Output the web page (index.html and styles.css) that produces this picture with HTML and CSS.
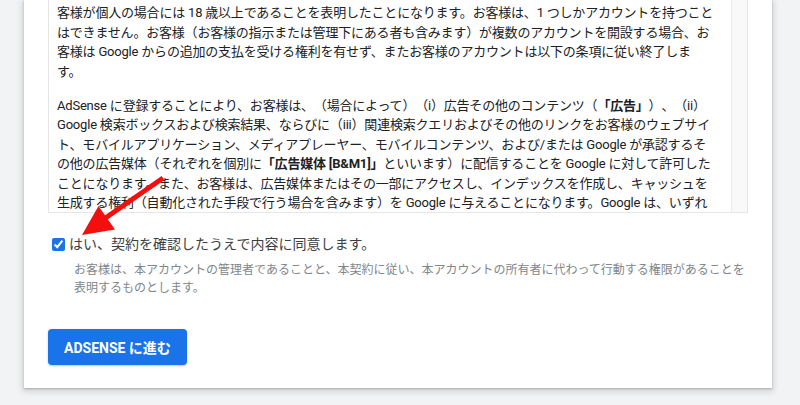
FILE: index.html
```html
<!DOCTYPE html>
<html lang="ja">
<head>
<meta charset="utf-8">
<title>AdSense 利用規約</title>
<link rel="stylesheet" href="styles.css">
</head>
<body>
<div class="page">
  <div class="card">
    <div class="terms">
      <div class="terms-text">
        <p>客様が個人の場合には 18 歳以上であることを表明したことになります。お客様は、1 つしかアカウントを持つこと<br>はできません。お客様（お客様の指示または管理下にある者も含みます）が複数のアカウントを開設する場合、お<br>客様は Google からの追加の支払を受ける権利を有せず、またお客様のアカウントは以下の条項に従い終了しま<br>す。</p>
        <p>AdSense に登録することにより、お客様は、（場合によって）（i）広告その他のコンテンツ（<b>「広告」</b>）、（ii）<br>Google 検索ボックスおよび検索結果、ならびに（iii）関連検索クエリおよびその他のリンクをお客様のウェブサイ<br>ト、モバイルアプリケーション、メディアプレーヤー、モバイルコンテンツ、および/または Google が承認するそ<br>の他の広告媒体（それぞれを個別に<b>「広告媒体 [B&amp;M1]」</b>といいます）に配信することを Google に対して許可した<br>ことになります。また、お客様は、広告媒体またはその一部にアクセスし、インデックスを作成し、キャッシュを<br>生成する権利（自動化された手段で行う場合を含みます）を Google に与えることになります。Google は、いずれ</p>
      </div>
      <div class="track"></div>
    </div>
    <label class="agree"><input type="checkbox" class="agree-box" checked><span>はい、契約を確認したうえで内容に同意します。</span></label>
    <p class="note">お客様は、本アカウントの管理者であることと、本契約に従い、本アカウントの所有者に代わって行動する権限があることを表明するものとします。</p>
    <button class="btn" type="button">ADSENSE に進む</button>
  </div>
  <svg class="arrow" width="800" height="405" viewBox="0 0 800 405" aria-hidden="true">
    <line x1="163" y1="178" x2="104" y2="219" stroke="#f40f0f" stroke-width="5"/>
    <polygon points="82,235 98.5,206 115,229.5" fill="#f40f0f"/>
  </svg>
</div>
</body>
</html>
```
FILE: styles.css
```css
html, body {
  margin: 0;
  padding: 0;
}
body {
  background: #f1f3f4;
  font-family: Roboto, "Noto Sans CJK JP", sans-serif;
  color: #202124;
  text-spacing-trim: space-all;
  text-autospace: no-autospace;
}
.page {
  position: relative;
  width: 800px;
  height: 405px;
  overflow: hidden;
  padding: 0 28px 0 24px;
  box-sizing: border-box;
}
.card {
  background: #fff;
  padding: 0 24px 23px;
  box-shadow: 0 1px 2px rgba(60, 64, 67, 0.3), 0 2px 6px 2px rgba(60, 64, 67, 0.15);
}
.terms {
  display: flex;
  height: 213px;
  box-sizing: border-box;
  border: 1px solid #e6e6e6;
  border-top: none;
  overflow: hidden;
}
.terms-text {
  flex: 1;
  min-width: 0;
  overflow: hidden;
  padding: 3px 8px 0 8px;
  font-size: 13px;
  line-height: 19.5px;
  letter-spacing: -0.2px;
  color: #202124;
  white-space: nowrap;
}
.terms-text p {
  margin: 0 0 14.5px;
}
.terms-text b {
  font-weight: 700;
}
.track {
  width: 15px;
  flex: none;
  background: #f9f9f9;
  border-left: 1px solid #ececec;
}
.agree {
  display: flex;
  align-items: center;
  margin-top: 21px;
  font-size: 14px;
  line-height: 20px;
  color: #3c4043;
}
.agree-box {
  width: 13px;
  height: 13px;
  margin: 3px 4px 3px 4px;
  accent-color: #1a73e8;
}
.note {
  margin: 7px 0 0;
  padding-left: 26px;
  font-size: 12px;
  line-height: 18px;
  color: #80868b;
}
.btn {
  display: block;
  margin-top: 32px;
  height: 36px;
  padding: 0 16px;
  border: none;
  border-radius: 4px;
  background: #1a73e8;
  color: #fff;
  font-family: Roboto, "Noto Sans CJK JP", sans-serif;
  font-size: 14px;
  font-weight: 700;
  box-shadow: 0 1px 2px rgba(60, 64, 67, 0.3);
}
.arrow {
  position: absolute;
  left: 0;
  top: 0;
}
```
